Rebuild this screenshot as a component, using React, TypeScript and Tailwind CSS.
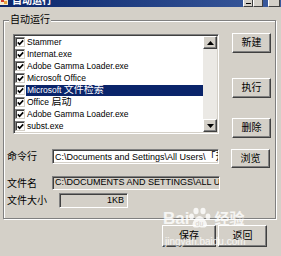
import React from "react";

const items = [
  "Stammer",
  "Internat.exe",
  "Adobe Gamma Loader.exe",
  "Microsoft Office",
  "Microsoft 文件检索",
  "Office 启动",
  "Adobe Gamma Loader.exe",
  "subst.exe",
];

// CJK runs render bigger than the latin text in the original dialog
function Mixed({ text }: { text: string }) {
  const parts = text.split(/([\u3000-\u9fff\uff00-\uffef]+)/);
  return (
    <span className="whitespace-pre">
      {parts.map((p, i) =>
        i % 2 === 1 ? (
          <span key={i} className="text-[10px]">
            {p}
          </span>
        ) : (
          <React.Fragment key={i}>{p}</React.Fragment>
        )
      )}
    </span>
  );
}

function Btn({ label, className = "" }: { label: string; className?: string }) {
  return (
    <button
      type="button"
      className={`flex items-center justify-center bg-[#d4d0c8] border border-t-white border-l-white border-r-[#404040] border-b-[#404040] shadow-[inset_-1px_-1px_0_#808080] text-[10px] leading-none text-black ${className}`}
    >
      {label}
    </button>
  );
}

function Check() {
  return (
    <div className="w-[10px] h-[10px] shrink-0 bg-white border border-t-[#808080] border-l-[#808080] border-b-[#d4d0c8] border-r-[#d4d0c8] shadow-[inset_1px_1px_0_#404040] flex items-center justify-center">
      <svg width="7" height="7" viewBox="0 0 7 7">
        <path d="M0.8 3.4 L2.6 5.3 L6.2 1.4" fill="none" stroke="#000" strokeWidth="1.6" />
      </svg>
    </div>
  );
}

function ScrollBtn({ up }: { up?: boolean }) {
  return (
    <div className="h-[13px] bg-[#d4d0c8] border border-t-white border-l-white border-r-[#404040] border-b-[#404040] shadow-[inset_-1px_-1px_0_#808080] flex items-center justify-center">
      <svg width="7" height="4" viewBox="0 0 7 4">
        <path d={up ? "M3.5 0 L7 4 L0 4 Z" : "M0 0 L7 0 L3.5 4 Z"} fill="#000" />
      </svg>
    </div>
  );
}

function TitleBtn({ children, className = "" }: { children?: React.ReactNode; className?: string }) {
  return (
    <div
      className={`w-[10px] h-[12px] bg-[#d4d0c8] border border-t-white border-l-white border-r-[#404040] border-b-[#404040] flex items-end justify-center ${className}`}
    >
      {children}
    </div>
  );
}

const sunken =
  "border border-t-[#808080] border-l-[#808080] border-b-white border-r-white shadow-[inset_1px_1px_0_#404040,inset_-1px_-1px_0_#d4d0c8]";

export default function App() {
  return (
    <div className="relative w-[281px] h-[256px] overflow-hidden bg-[#d4d0c8] font-['Liberation_Sans','Noto_Sans_CJK_SC',sans-serif] text-black">
      {/* title bar, its top is cut off */}
      <div className="h-[7px] overflow-hidden">
        <div className="-mt-[8px] h-[18px] flex items-center bg-linear-to-r from-[#0a246a] to-[#3b5b9e]">
          <svg width="9" height="9" viewBox="0 0 9 9" className="shrink-0">
            <rect x="0" y="1" width="8" height="7" fill="#f3e9d0" />
            <rect x="1" y="2" width="3" height="3" fill="#d23a2a" />
            <rect x="4" y="4" width="3" height="3" fill="#e9a23b" />
          </svg>
          <span className="ml-[3px] text-[10px] font-bold text-white leading-none">自动运行</span>
          <div className="ml-auto mr-[1px] flex items-center">
            <TitleBtn>
              <div className="w-[5px] h-[1px] bg-black mb-[2px]" />
            </TitleBtn>
            <TitleBtn />
            <TitleBtn className="ml-[5px] w-[12px]" />
          </div>
        </div>
      </div>

      {/* group box */}
      <div className="relative ml-[3px] mt-[13px] w-[273px] h-[199px] border border-[#808080] shadow-[inset_1px_1px_0_#fff,1px_1px_0_#fff]">
        <span className="absolute left-[5px] -top-[7px] px-[1px] bg-[#d4d0c8] text-[10px] leading-[12px]">
          自动运行
        </span>

        <div className="flex items-start pt-[12px] pl-[9px]">
          {/* list */}
          <div className={`mt-[1px] w-[206px] h-[100px] p-[1px] bg-white flex ${sunken}`}>
            <div className="flex-1 min-w-0">
              {items.map((it, i) => (
                <div key={i} className="h-[12px] flex items-center text-[8.5px] leading-[12px]">
                  <Check />
                  <div
                    className={`ml-[1px] flex-1 h-[11px] pl-[1px] flex items-center overflow-hidden ${
                      i === 4 ? "bg-[#0a246a] text-white" : ""
                    }`}
                  >
                    <Mixed text={it} />
                  </div>
                </div>
              ))}
            </div>
            <div className="w-[14px] flex flex-col">
              <ScrollBtn up />
              <div className="flex-1 bg-[#ebe9e5]" />
              <ScrollBtn />
            </div>
          </div>

          {/* right buttons */}
          <div className="ml-[13px] flex flex-col">
            <Btn label="新建" className="w-[39px] h-[20px]" />
            <Btn label="执行" className="w-[39px] h-[20px] mt-[25px]" />
            <Btn label="删除" className="w-[39px] h-[20px] mt-[20px]" />
          </div>
        </div>

        <div className="flex items-start mt-[11px] pl-[3px]">
          <div className="w-[45px] h-[15px] flex items-center text-[10px]">命令行</div>
          <div className={`w-[167px] h-[15px] bg-white px-[2px] flex items-center overflow-hidden text-[9px] ${sunken}`}>
            <Mixed text="C:\Documents and Settings\All Users\「开始」菜单\程序\启动" />
          </div>
          <Btn label="浏览" className="ml-[12px] w-[39px] h-[19px]" />
        </div>

        <div className="flex items-start mt-[8px] pl-[3px]">
          <div className="w-[45px] h-[14px] flex items-center text-[10px]">文件名</div>
          <div className={`w-[168px] h-[14px] bg-[#d4d0c8] px-[2px] flex items-center overflow-hidden whitespace-nowrap text-[9px] ${sunken}`}>
            C:\DOCUMENTS AND SETTINGS\ALL USERS\「开始」菜单
          </div>
        </div>

        <div className="flex items-start mt-[3px] pl-[3px]">
          <div className="w-[52px] h-[15px] flex items-center text-[10px]">文件大小</div>
          <div className={`w-[69px] h-[15px] bg-[#d4d0c8] px-[3px] flex items-center justify-end text-[9px] ${sunken}`}>
            1KB
          </div>
        </div>
      </div>

      {/* bottom buttons */}
      <div className="flex justify-end gap-[2px] mt-[6px] mr-[14px]">
        <Btn label="保存" className="w-[54px] h-[22px]" />
        <Btn label="返回" className="w-[49px] h-[22px]" />
      </div>

      {/* watermark */}
      <div className="pointer-events-none absolute left-[163px] top-[207px] text-white/80">
        <div className="flex items-center">
          <span className="text-[17px] font-bold leading-none">Bai</span>
          <svg width="24" height="22" viewBox="0 0 24 22" className="-ml-[1px]">
            <g fill="#fff" fillOpacity="0.8">
              <ellipse cx="8" cy="4" rx="2.6" ry="3.2" />
              <ellipse cx="15" cy="4" rx="2.6" ry="3.2" />
              <ellipse cx="3.5" cy="9.5" rx="2.4" ry="3" />
              <ellipse cx="20" cy="9.5" rx="2.4" ry="3" />
              <path d="M11.5 9 C8 9 4.5 15 4.5 17.5 C4.5 21 8 21 11.5 20 C15 21 19 21 19 17.5 C19 15 15 9 11.5 9 Z" />
            </g>
            <text x="7.5" y="18.5" fontSize="7" fill="#d4d0c8" fontFamily="Liberation Sans">du</text>
          </svg>
          <span className="ml-[2px] text-[15px] font-bold leading-none">经验</span>
        </div>
        <div className="ml-[2px] mt-[8px] text-[10px] leading-none">jingyan.baidu.com</div>
      </div>
    </div>
  );
}
